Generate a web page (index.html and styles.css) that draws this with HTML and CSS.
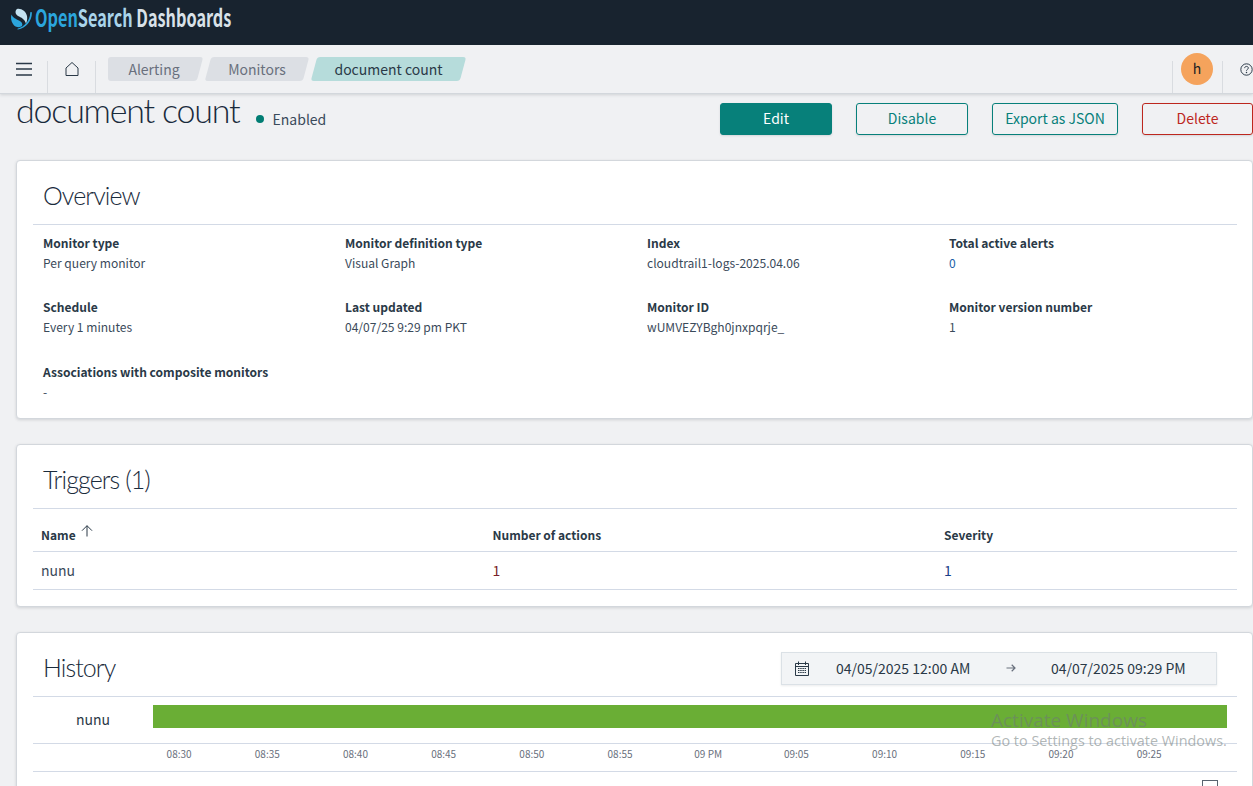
FILE: index.html
```html
<!DOCTYPE html>
<html lang="en">
<head>
<meta charset="utf-8">
<title>document count</title>
<link rel="stylesheet" href="styles.css">
</head>
<body>
<div class="page">
  <header class="topbar">
    <svg class="logo-mark" viewBox="0 0 22 24" width="22" height="24"><path d="M7 1C11 0 16 3 17 8C17.500 11 17 13 16 16C15 11 11 9.500 8 8C5.500 6.500 4.500 3 7 1z" fill="#c4e2f1"/><path d="M1.500 6.500C3 10 6 11 9 12.500C12 14 13 16 12 18C10 20 5 19.500 3 16C1 13 .5 9.500 1.500 6.500z" fill="#2ba5dd"/><path d="M21 4C21.500 4 21.900 4.400 21.900 5C21.900 13 16 20 8 21.500C7.500 21.500 7.200 21 7.500 20.700C14 19 20 13 20.200 5C20.200 4.500 20.500 4 21 4z" fill="#2ba5dd"/></svg>
    <span class="brand"><span class="brand-open">Open</span><span class="brand-search">Search</span> <span class="brand-dash">Dashboards</span></span>
  </header>

  <nav class="subbar">
    <div class="nav-cell nav-menu">
      <svg viewBox="0 0 16 16" width="16" height="16"><path d="M0 2.500h16M0 8h16M0 14h16" stroke="#2a3947" stroke-width="1.700" fill="none"/></svg>
    </div>
    <div class="nav-cell nav-home">
      <svg viewBox="0 0 16 16" width="16" height="16"><path d="M8 1.500 14 7V14.500H2V7z" stroke="#2a3947" stroke-width="1" fill="none" stroke-linejoin="round"/></svg>
    </div>
    <div class="crumbs">
      <span class="crumb crumb-first">Alerting</span>
      <span class="crumb crumb-mid">Monitors</span>
      <span class="crumb crumb-last">document count</span>
    </div>
    <div class="nav-right">
      <div class="nav-avatar"><span class="avatar">h</span></div>
      <div class="nav-help">
        <svg class="help-icon" viewBox="0 0 16 16" width="13" height="13"><circle cx="8" cy="8" r="7" stroke="#2a3947" stroke-width="1.200" fill="none"/><path d="M5.700 6.300c0-1.300 1.100-2.100 2.300-2.100s2.300.8 2.300 2c0 1.600-2.300 1.700-2.300 3.300" stroke="#2a3947" stroke-width="1.200" fill="none"/><circle cx="8" cy="11.800" r=".9" fill="#2a3947"/></svg>
      </div>
    </div>
  </nav>

  <main class="content">
    <div class="title-row">
      <h1 class="page-title">document count</h1>
      <span class="status"><span class="dot"></span>Enabled</span>
      <div class="actions">
        <button class="btn btn-fill">Edit</button>
        <button class="btn btn-line">Disable</button>
        <button class="btn btn-line btn-wide">Export as JSON</button>
        <button class="btn btn-danger">Delete</button>
      </div>
    </div>

    <section class="card card-overview">
      <h2 class="card-title">Overview</h2>
      <div class="rule"></div>
      <div class="facts">
        <div class="fact"><div class="fact-label">Monitor type</div><div class="fact-value">Per query monitor</div></div>
        <div class="fact"><div class="fact-label">Monitor definition type</div><div class="fact-value">Visual Graph</div></div>
        <div class="fact"><div class="fact-label">Index</div><div class="fact-value">cloudtrail1-logs-2025.04.06</div></div>
        <div class="fact"><div class="fact-label">Total active alerts</div><div class="fact-value link">0</div></div>
        <div class="fact"><div class="fact-label">Schedule</div><div class="fact-value">Every 1 minutes</div></div>
        <div class="fact"><div class="fact-label">Last updated</div><div class="fact-value">04/07/25 9:29 pm PKT</div></div>
        <div class="fact"><div class="fact-label">Monitor ID</div><div class="fact-value">wUMVEZYBgh0jnxpqrje_</div></div>
        <div class="fact"><div class="fact-label">Monitor version number</div><div class="fact-value">1</div></div>
        <div class="fact fact-wide"><div class="fact-label">Associations with composite monitors</div><div class="fact-value">-</div></div>
      </div>
    </section>

    <section class="card card-triggers">
      <h2 class="card-title">Triggers (1)</h2>
      <div class="rule"></div>
      <div class="trow thead">
        <div class="tcell"><b>Name</b><svg class="sort" viewBox="0 0 12 12" width="12" height="12"><path d="M6 11.500V.7M1 5.700 6 .7l5 5" stroke="#2a3947" stroke-width="1" fill="none"/></svg></div>
        <div class="tcell"><b>Number of actions</b></div>
        <div class="tcell"><b>Severity</b></div>
      </div>
      <div class="trow tbody">
        <div class="tcell">nunu</div>
        <div class="tcell num-red">1</div>
        <div class="tcell num-blue">1</div>
      </div>
    </section>

    <section class="card card-history">
      <div class="history-head">
        <h2 class="card-title">History</h2>
        <div class="range">
          <svg viewBox="0 0 14 15" width="14" height="15"><path d="M.5 2.500h13v12h-13zM.5 5.500h13M3.500 .5v3.500M10.500 .5v3.500" stroke="#2a3947" stroke-width="1" fill="none"/><path d="M3 7.500h8M3 9.500h8M3 11.500h8" stroke="#2a3947" stroke-width="1.200" stroke-dasharray="1.500 .7" fill="none"/></svg>
          <span class="range-from">04/05/2025 12:00 AM</span>
          <svg class="range-arrow" viewBox="0 0 10 8" width="10" height="8"><path d="M.5 4h8.500M5.700 .8 9 4 5.700 7.200" stroke="#69707d" stroke-width="1.200" fill="none"/></svg>
          <span class="range-to">04/07/2025 09:29 PM</span>
        </div>
      </div>
      <div class="rule"></div>
      <div class="timeline">
        <div class="timeline-label">nunu</div>
        <div class="timeline-bar"></div>
      </div>
      <div class="rule"></div>
      <div class="axis">
        <span>08:30</span><span>08:35</span><span>08:40</span><span>08:45</span><span>08:50</span><span>08:55</span><span>09 PM</span><span>09:05</span><span>09:10</span><span>09:15</span><span>09:20</span><span>09:25</span>
      </div>
      <div class="rule"></div>
      <div class="legend"><span class="checkbox"></span></div>
    </section>
  </main>

  <div class="watermark">
    <div class="wm-title">Activate Windows</div>
    <div class="wm-sub">Go to Settings to activate Windows.</div>
  </div>
</div>
</body>
</html>
```
FILE: styles.css
```css
* { box-sizing: border-box; }
html, body { margin: 0; height: 100%; overflow: hidden; }
body { background: #f0f1f3; font-family: "Noto Sans CJK SC", "Noto Sans", sans-serif; color: #2a3947; }
.page { width: 1253px; height: 786px; overflow: hidden; position: relative; }

.topbar { height: 45px; background: #18232f; display: flex; align-items: flex-start; padding: 8px 0 0 10px; }
.logo-mark { flex: none; margin-right: 3px; }
.brand { font-size: 24px; font-weight: 700; line-height: 22px; margin-top: -2px; transform: scaleX(.677); transform-origin: left center; white-space: nowrap; }
.brand-open { color: #2ba5dd; }
.brand-search { color: #a9d4ea; }
.brand-dash { color: #d9e1e8; }

.subbar { height: 49px; background: #f0f1f3; border-bottom: 1px solid #d3d7dc; box-shadow: 0 1px 3px rgba(60,70,80,.18); display: flex; position: relative; z-index: 2; }
.nav-cell { display: flex; justify-content: center; border-right: 1px solid #d9dce0; margin-top: 16px; }
.nav-menu { width: 48px; }
.nav-home { width: 48px; }
.crumbs { display: flex; margin: 12px 0 0 12px; gap: 8px; height: 24px; }
.crumb { position: relative; z-index: 0; height: 24px; line-height: 24px; font-size: 14px; color: #69707d; text-align: center; white-space: nowrap; }
.crumb::before { content: ""; position: absolute; inset: 0; z-index: -1; background: #dcdfe4; border-radius: 3px; transform: skewX(-15deg); }
.crumb-first { width: 92px; }
.crumb-first::before { left: 20px; }
.crumb-first::after { content: ""; position: absolute; left: 0; top: 0; bottom: 0; width: 40px; z-index: -1; background: #dcdfe4; border-radius: 3px 0 0 3px; }
.crumb-mid { width: 98px; }
.crumb-last { width: 149px; color: #2a3947; }
.crumb-last::before { background: #b6dcdb; }
.nav-right { margin-left: auto; display: flex; }
.nav-avatar { width: 51px; margin-top: 16px; border-left: 1px solid #d9dce0; border-right: 1px solid #d9dce0; position: relative; }
.avatar { position: absolute; left: 8px; top: -8px; width: 32px; height: 32px; border-radius: 50%; background: #f5a35c; color: #222; font-size: 14px; line-height: 30px; text-align: center; }
.nav-help { width: 30px; padding: 18px 0 0 17px; }
.help-icon { display: block; }

.content { padding: 0 0 0 16px; width: 1253px; }
.title-row { height: 66px; display: flex; align-items: flex-start; white-space: nowrap; }
.page-title { margin: -5px 0 0 0; font-family: Lato, sans-serif; font-size: 34px; font-weight: 300; line-height: 42px; letter-spacing: -1.200px; color: #1a2b3c; }
.status { display: flex; align-items: center; font-size: 14px; margin: 15px 0 0 16px; height: 20px; color: #3a4a5a; }
.dot { width: 8px; height: 8px; border-radius: 50%; background: #017d73; margin-right: 9px; }
.actions { margin-left: auto; display: flex; gap: 24px; margin-top: 9px; }
.btn { height: 32px; width: 112px; border-radius: 3px; font: inherit; font-size: 14px; background: transparent; padding: 0 0 2px; box-shadow: 0 1px 2px rgba(60,70,80,.15); }
.btn-fill { background: #07807a; border: 1px solid #07807a; color: #fff; }
.btn-line { border: 1px solid #07807a; color: #07807a; }
.btn-wide { width: 126px; }
.btn-danger { width: 111px; border: 1px solid #bd271e; color: #bd271e; }

.card { background: #fff; border: 1px solid #d3d7dc; border-radius: 4px; box-shadow: 0 1px 3px rgba(60,70,80,.18); padding: 0 15px 0 16px; margin-bottom: 25px; }
.card-title { font-family: Lato, sans-serif; font-size: 25px; font-weight: 300; line-height: 32px; letter-spacing: -.9px; margin: -1px 0 0 10px; color: #1a2b3c; }
.rule { height: 1px; background: #d3dae6; }

.card-overview { height: 259px; padding-top: 19px; }
.card-overview .rule { margin-top: 13px; }
.facts { display: grid; grid-template-columns: repeat(4, 302px); margin: 8px 0 0 10px; row-gap: 24px; }
.fact { height: 40px; }
.fact-wide { grid-column: 1 / -1; margin-top: 1px; }
.fact-label { font-size: 12.050px; font-weight: 700; line-height: 20px; color: #2a3947; }
.fact-value { font-size: 12.050px; line-height: 20px; color: #3a4a5a; }
.link { color: #1a5fa8; }

.card-triggers { height: 163px; padding-top: 19px; }
.card-triggers .rule { margin-top: 13px; }
.trow { display: grid; grid-template-columns: 451.500px 451.500px 1fr; border-bottom: 1px solid #d3dae6; align-items: center; }
.tcell { padding-left: 8px; display: flex; align-items: center; }
.thead { height: 43px; font-size: 12px; padding-top: 8px; }
.tbody { height: 38px; font-size: 14px; color: #3a4a5a; padding-bottom: 2px; }
.sort { margin: -7px 0 0 5px; }
.num-red { color: #7a1f2a; }
.num-blue { color: #1a3f8a; }

.card-history { height: 200px; }
.history-head { display: flex; justify-content: space-between; align-items: flex-start; padding-top: 19px; height: 63px; }
.range { width: 436px; height: 33px; background: #f2f4f6; border: 1px solid #dbe1e6; box-shadow: 0 1px 2px rgba(60,70,80,.1); display: flex; align-items: center; padding: 0 0 1px 13px; font-size: 14px; margin-right: 20px; }
.range-from { margin-left: 27px; width: 135px; white-space: nowrap; }
.range-arrow { margin-left: 35px; flex: none; }
.range-to { margin-left: 35px; white-space: nowrap; }
.timeline { display: flex; height: 46px; }
.timeline-label { width: 120px; text-align: center; font-size: 14px; line-height: 44px; }
.timeline-bar { width: 1074px; height: 23px; margin-top: 8px; background: #6aae35; }
.axis { height: 27px; padding-left: 102px; display: grid; grid-template-columns: repeat(12, 88.200px); font-size: 10px; color: #69707d; line-height: 20px; }
.axis span { text-align: center; }
.legend { display: flex; justify-content: flex-end; padding: 8px 2px 0 0; }
.checkbox { width: 16px; height: 16px; border: 1px solid #5a6570; background: #fff; margin-right: 17px; }

.watermark { position: absolute; left: 991px; top: 707px; color: rgba(110,120,120,.55); font-family: "Open Sans", sans-serif; z-index: 3; white-space: nowrap; }
.wm-title { font-size: 19px; line-height: 26px; }
.wm-sub { font-size: 14.400px; line-height: 20px; margin-top: -2px; }
```
